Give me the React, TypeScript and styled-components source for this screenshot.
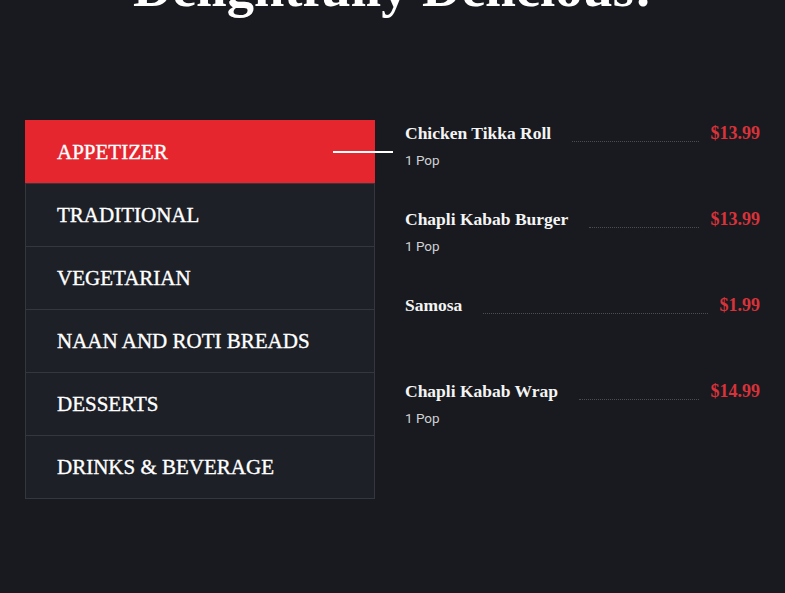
import React, { useState } from 'react';
import styled, { createGlobalStyle } from 'styled-components';

const GlobalStyle = createGlobalStyle`
  html, body {
    margin: 0;
    padding: 0;
    background: #181a1f;
  }
  body {
    font-family: 'Liberation Serif', serif;
    color: #ffffff;
    overflow: hidden;
  }
`;

const Page = styled.section`
  min-height: 593px;
  background: #181a1f;
  padding: 0 25px;
  box-sizing: border-box;
`;

const Heading = styled.h2`
  margin: -39px 0 105px;
  font-family: 'Liberation Serif', serif;
  font-weight: 700;
  font-size: 54.5px;
  line-height: 54px;
  text-align: center;
  color: #ffffff;
`;

const MenuGrid = styled.div`
  display: grid;
  grid-template-columns: 350px 1fr;
  column-gap: 30px;
  align-items: start;
`;

const TabList = styled.ul`
  list-style: none;
  margin: 0;
  padding: 0;
  display: flex;
  flex-direction: column;
`;

const Tab = styled.li<{ $active?: boolean }>`
  position: relative;
  height: 64px;
  box-sizing: border-box;
  display: flex;
  align-items: center;
  padding-left: 31px;
  font-size: 21px;
  color: #ffffff;
  -webkit-text-stroke: 0.35px #ffffff;
  background: ${p => (p.$active ? '#e6262f' : '#1d2027')};
  border: 1px solid ${p => (p.$active ? '#e6262f' : '#34373d')};
  margin-top: -1px;
  cursor: pointer;

  &:first-child {
    margin-top: 0;
  }

  ${p =>
    p.$active &&
    `
    &::after {
      content: '';
      position: absolute;
      left: 307px;
      top: 30px;
      width: 60px;
      height: 2px;
      background: #ffffff;
    }
  `}
`;

const ItemList = styled.div`
  display: flex;
  flex-direction: column;
`;

const Item = styled.div`
  min-height: 86px;
`;

const ItemRow = styled.div`
  display: flex;
  align-items: center;
  height: 26px;
`;

const ItemName = styled.span`
  font-size: 17.5px;
  font-weight: 700;
  color: #f4f4f4;
  white-space: nowrap;
`;

const Dots = styled.span`
  flex: 1;
  height: 0;
  margin: 16px 12px 0 21px;
  border-bottom: 1px dotted #4a4d52;
`;

const Price = styled.span`
  font-size: 18px;
  font-weight: 700;
  color: #d8323a;
  white-space: nowrap;
`;

const ItemNote = styled.div`
  margin-top: 6px;
  font-family: Roboto, 'Liberation Sans', sans-serif;
  font-size: 13.5px;
  line-height: 16px;
  color: #d0d1d4;
`;

const categories = [
  'APPETIZER',
  'TRADITIONAL',
  'VEGETARIAN',
  'NAAN AND ROTI BREADS',
  'DESSERTS',
  'DRINKS & BEVERAGE',
];

const items = [
  { name: 'Chicken Tikka Roll', price: '$13.99', note: '1 Pop' },
  { name: 'Chapli Kabab Burger', price: '$13.99', note: '1 Pop' },
  { name: 'Samosa', price: '$1.99' },
  { name: 'Chapli Kabab Wrap', price: '$14.99', note: '1 Pop' },
];

export default function App() {
  const [active, setActive] = useState(0);

  return (
    <Page>
      <GlobalStyle />
      <Heading>Delightfully Delicious!</Heading>
      <MenuGrid>
        <TabList>
          {categories.map((c, i) => (
            <Tab key={c} $active={i === active} onClick={() => setActive(i)}>
              {c}
            </Tab>
          ))}
        </TabList>
        <ItemList>
          {items.map(item => (
            <Item key={item.name}>
              <ItemRow>
                <ItemName>{item.name}</ItemName>
                <Dots />
                <Price>{item.price}</Price>
              </ItemRow>
              {item.note && <ItemNote>{item.note}</ItemNote>}
            </Item>
          ))}
        </ItemList>
      </MenuGrid>
    </Page>
  );
}
